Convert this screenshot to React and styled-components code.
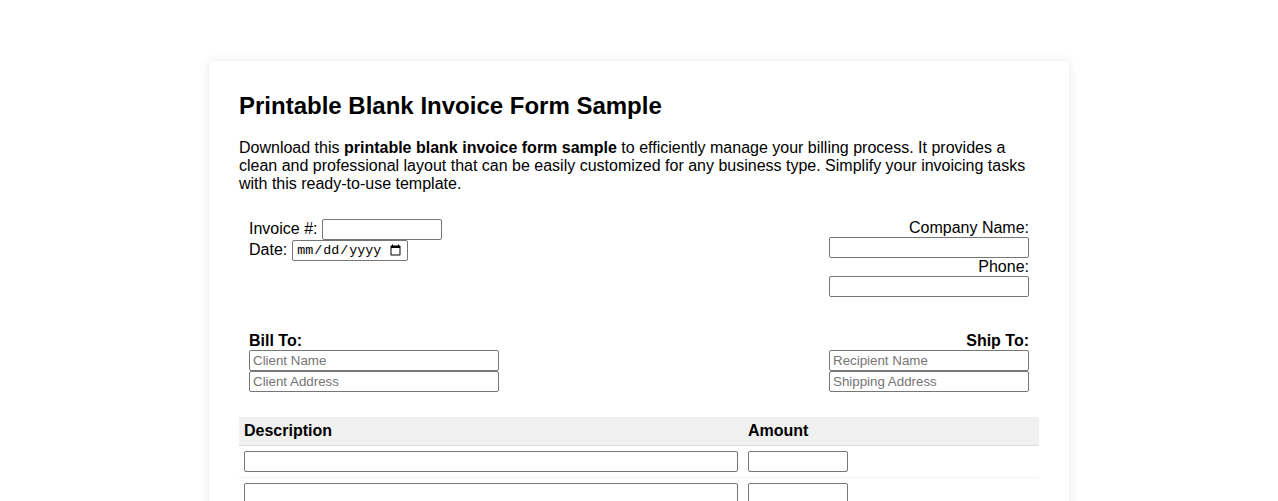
import React from 'react'
import styled, { createGlobalStyle } from 'styled-components'

const GlobalStyle = createGlobalStyle`
	html, body {
		margin: 0;
		padding: 0;
		background: #ffffff;
		font-family: "Liberation Sans", Arial, sans-serif;
		color: #000;
	}
	body {
		overflow: hidden;
	}
`

const Card = styled.div`
	width: 800px;
	margin: 61px auto 0;
	padding: 30px;
	background: #fff;
	border-radius: 4px;
	box-shadow: 0 0 10px rgba(0, 0, 0, 0.1);
`

const Title = styled.h1`
	margin: 0 0 19px;
	padding-top: 1px;
	font-size: 24px;
	font-weight: bold;
	line-height: 28px;
`

const Intro = styled.p`
	margin: 0 0 15px;
	font-size: 16px;
	line-height: 18px;
`

const Header = styled.div`
	display: flex;
	justify-content: space-between;
	padding: 10px;
	font-size: 16px;
`

const Side = styled.div`
	display: flex;
	flex-direction: column;
	align-items: ${p => (p.$right ? 'flex-end' : 'flex-start')};
	text-align: ${p => (p.$right ? 'right' : 'left')};
	margin-top: ${p => p.$nudge || 0}px;
`

const Line = styled.div`
	display: flex;
	align-items: center;
	height: ${p => p.$h || 21}px;
	line-height: 18px;
`

const Label = styled.span`
	margin-right: 5px;
	margin-top: -1px;
`

const Field = styled.input`
	box-sizing: border-box;
	width: ${p => p.$w}px;
	height: 21px;
	margin: 0;
	padding: 1px 3px;
	border: 1px solid #767676;
	border-radius: 2px;
	background: #fff;
	font-family: ${p => (p.type === 'date' ? '"Liberation Mono", monospace' : '"Liberation Sans", Arial, sans-serif')};
	font-size: 13.333px;
	color: #000;
	display: ${p => (p.$block ? 'block' : 'inline-block')};
	&::placeholder {
		color: #757575;
	}
`

const Parties = styled.div`
	display: flex;
	justify-content: space-between;
	margin-top: 14px;
	padding: 10px;
	margin-bottom: 15px;
`

const PartyTitle = styled.div`
	font-size: 16px;
	font-weight: bold;
	line-height: 19px;
	height: 19px;
`

const Items = styled.table`
	width: 100%;
	border-collapse: collapse;
	font-size: 16px;
`

const Th = styled.th`
	padding: 5px;
	text-align: left;
	background: #f0f0f0;
	border-bottom: 1px solid #dddddd;
	line-height: 18px;
	font-weight: bold;
	width: ${p => p.$w || 'auto'};
`

const Td = styled.td`
	padding: 5px;
	border-bottom: 1px solid #f3f3f3;
	line-height: 0;
`

const rows = [0, 1, 2]

export default function App() {
	return (
		<>
			<GlobalStyle />
			<Card>
				<Title>Printable Blank Invoice Form Sample</Title>
				<Intro>
					Download this <b>printable blank invoice form sample</b> to efficiently manage your billing process. It provides a clean and professional layout that can be easily customized for any business type. Simplify your invoicing tasks with this ready-to-use template.
				</Intro>
				<Header>
					<Side $nudge={1}>
						<Line>
							<Label>Invoice #:</Label>
							<Field type="text" $w={120} />
						</Line>
						<Line>
							<Label>Date:</Label>
							<Field type="date" $w={116} />
						</Line>
					</Side>
					<Side $right>
						<Line $h={19}>Company Name:</Line>
						<Field type="text" $w={200} $block />
						<Line $h={18}>Phone:</Line>
						<Field type="text" $w={200} $block />
					</Side>
				</Header>
				<Parties>
					<Side>
						<PartyTitle>Bill To:</PartyTitle>
						<Field type="text" $w={250} $block placeholder="Client Name" />
						<Field type="text" $w={250} $block placeholder="Client Address" />
					</Side>
					<Side $right>
						<PartyTitle>Ship To:</PartyTitle>
						<Field type="text" $w={200} $block placeholder="Recipient Name" />
						<Field type="text" $w={200} $block placeholder="Shipping Address" />
					</Side>
				</Parties>
				<Items>
					<thead>
						<tr>
							<Th $w="494px">Description</Th>
							<Th>Amount</Th>
						</tr>
					</thead>
					<tbody>
						{rows.map(r => (
							<tr key={r}>
								<Td><Field type="text" $w={494} /></Td>
								<Td><Field type="text" $w={100} /></Td>
							</tr>
						))}
					</tbody>
				</Items>
			</Card>
		</>
	)
}
